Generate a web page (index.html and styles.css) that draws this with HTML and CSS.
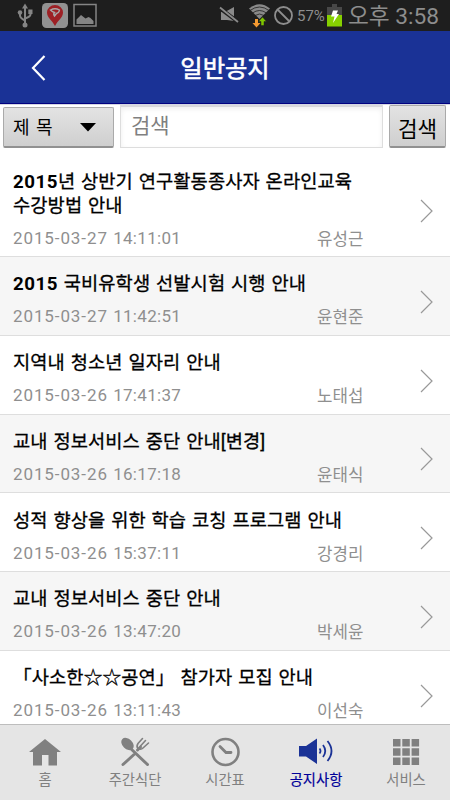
FILE: index.html
```
<!DOCTYPE html>
<html lang="ko">
<head>
<meta charset="utf-8">
<title>일반공지</title>
<link rel="stylesheet" href="styles.css">
</head>
<body>
<div class="status">
  <svg class="status-left" width="100" height="31" viewBox="0 0 100 31">
    <g fill="none" stroke="#858585" stroke-width="2"><path d="M25 7V25M20 12V15.500Q20 18 25 20.500M30.500 12V14.500Q30 17 25 18.500"/></g>
    <g fill="#858585"><path d="M25 3.500l3 5h-6z"/><circle cx="20" cy="12.500" r="2.300"/><path d="M28.300 9.500h4.200V14h-4.200z"/><circle cx="25" cy="25" r="2.500"/></g>
    <rect x="42" y="3" width="26" height="25" rx="4.500" fill="#929292"/>
    <path d="M55 26C52 20 47 17.500 47 12.500a8 7.500 0 0 1 16 0C63 17.500 58 20 55 26z" fill="#9d2025"/>
    <path d="M50.500 10q4.500-2.500 9 0-.5 3-3 3.500L54.500 16q-1.500-2 0-3.500-2-.5-4-2.500z" fill="none" stroke="#aaa" stroke-width="1.400"/>
    <rect x="74" y="4.500" width="22" height="21.500" fill="#1b1b1b" stroke="#858585" stroke-width="1.500"/>
    <path d="M76.500 24V19.500l4.500-4.500 4.500 3.500 3-1.500 2 1 3 3v3z" fill="#858585"/>
  </svg>
  <div class="status-right">
    <svg width="76" height="31" viewBox="0 0 76 31">
      <path d="M2 12h4l9-5v14L8 20H2z" fill="#8a8a8a"/><path d="M0 7.500l18.500 14" stroke="#1e1e1e" stroke-width="4"/><path d="M1 7.500L19 22" stroke="#8a8a8a" stroke-width="1.800"/>
      <path d="M30 8.500Q40.500 0 51 8.500L40.500 19z" fill="#8a8a8a"/><g fill="none" stroke="#1e1e1e" stroke-width=".8"><path d="M31 10.500q9.500-7 19 0M33.500 13q7-5 14 0M36 15.500q4.500-3 9 0"/></g>
      <path d="M36 19v4h-2.500l4 4.500 4-4.500H39v-4z" fill="#f39a31"/><path d="M43.500 17l4 4.500H45v4h-3v-4h-2.500z" fill="#7fc500" stroke="#1e1e1e" stroke-width=".5"/>
      <circle cx="64.500" cy="15.500" r="8.500" fill="none" stroke="#8d8d8d" stroke-width="1.800"/><path d="M58.500 9.500l12 12" stroke="#8d8d8d" stroke-width="1.800"/>
    </svg>
    <span class="percent">57%</span>
    <svg width="15" height="31" viewBox="0 0 15 31"><path d="M5 4h5v3h5v8H0V7h5z" fill="#484848"/><path d="M0 15h15v11.500H0z" fill="#86d000"/><path d="M6 10.500h5L9.500 14H12l-6 9 1.500-6.500H4z" fill="#fff"/></svg>
    <span class="clock">오후 3:58</span>
  </div>
</div>
<header class="header">
  <svg class="back" width="18" height="30" viewBox="0 0 18 30"><path d="M16.500 3L5 15l11.500 12" fill="none" stroke="#fff" stroke-width="2.200"/></svg>
  <h1>일반공지</h1>
</header>
<div class="search">
  <div class="button select"><span>제 목</span><svg width="16" height="9" viewBox="0 0 16 9"><path d="M0 0h16L8 8.500z"/></svg></div>
  <div class="field">검색</div>
  <div class="button submit">검색</div>
</div>
<main class="list">
  <article class="row first"><div class="text"><h2><b>2015</b>년 상반기 연구활동종사자 온라인교육<br>수강방법 안내</h2><p><time><span class="day">2015-03-27</span> 14:11:01</time><span>유성근</span></p></div><svg class="arrow" viewBox="0 0 14 24"><path d="M1 1l11 11L1 23"/></svg></article>
  <article class="row"><div class="text"><h2><b>2015</b> 국비유학생 선발시험 시행 안내</h2><p><time><span class="day">2015-03-27</span> 11:42:51</time><span>윤현준</span></p></div><svg class="arrow" viewBox="0 0 14 24"><path d="M1 1l11 11L1 23"/></svg></article>
  <article class="row"><div class="text"><h2>지역내 청소년 일자리 안내</h2><p><time><span class="day">2015-03-26</span> 17:41:37</time><span>노태섭</span></p></div><svg class="arrow" viewBox="0 0 14 24"><path d="M1 1l11 11L1 23"/></svg></article>
  <article class="row"><div class="text"><h2>교내 정보서비스 중단 안내[변경]</h2><p><time><span class="day">2015-03-26</span> 16:17:18</time><span>윤태식</span></p></div><svg class="arrow" viewBox="0 0 14 24"><path d="M1 1l11 11L1 23"/></svg></article>
  <article class="row"><div class="text"><h2>성적 향상을 위한 학습 코칭 프로그램 안내</h2><p><time><span class="day">2015-03-26</span> 15:37:11</time><span>강경리</span></p></div><svg class="arrow" viewBox="0 0 14 24"><path d="M1 1l11 11L1 23"/></svg></article>
  <article class="row"><div class="text"><h2>교내 정보서비스 중단 안내</h2><p><time><span class="day">2015-03-26</span> 13:47:20</time><span>박세윤</span></p></div><svg class="arrow" viewBox="0 0 14 24"><path d="M1 1l11 11L1 23"/></svg></article>
  <article class="row"><div class="text"><h2>「사소한☆☆공연」 참가자 모집 안내</h2><p><time><span class="day">2015-03-26</span> 13:11:43</time><span>이선숙</span></p></div><svg class="arrow" viewBox="0 0 14 24"><path d="M1 1l11 11L1 23"/></svg></article>
</main>
<nav class="tabs">
  <div class="tab"><svg width="36" height="32" viewBox="0 0 36 32"><path d="M18 2l16 13h-4v13.500h-8.500V18h-6.500v10.500H6V15H2z" fill="#808080"/></svg><span>홈</span></div>
  <div class="tab"><svg width="36" height="32" viewBox="0 0 36 32"><g fill="none" stroke="#808080" stroke-linecap="round"><path d="M12 10l18.500 17.500M6 27.500l11-10" stroke-width="3"/><path d="M20.500 13l3-3" stroke-width="3"/><path d="M25.500 1.500l-4.500 5q-2 3 0 5 3 1.500 5-.5l5.500-5M28.500 3.500l-5 5.500" stroke-width="1.600"/></g><ellipse cx="10.500" cy="7" rx="5" ry="7.200" transform="rotate(-45 10.500 7)" fill="#808080"/></svg><span>주간식단</span></div>
  <div class="tab"><svg width="36" height="32" viewBox="0 0 36 32"><g fill="none" stroke="#808080"><circle cx="18.500" cy="15" r="13" stroke-width="2.600"/><path d="M13 9.500l6 6h5" stroke-width="2.800" stroke-linecap="round"/></g></svg><span>시간표</span></div>
  <div class="tab active"><svg width="36" height="32" viewBox="0 0 36 32"><path d="M1 9h7l11-7.500V27L8 19.500H1z" fill="#1a3296"/><g fill="none" stroke="#1a3296" stroke-width="1.800"><path d="M21.500 11.500q2 2.500 0 5M25 8q4.500 6 0 12M29.500 4q8 10 0 20"/></g></svg><span>공지사항</span></div>
  <div class="tab"><svg width="36" height="32" viewBox="0 0 36 32"><path fill="#808080" d="M5 2h7.500v7.500H5zM14.300 2h7.500v7.500h-7.500zM23.600 2h7.500v7.500h-7.500zM5 11.300h7.500v7.500H5zM14.300 11.300h7.500v7.500h-7.500zM23.600 11.300h7.500v7.500h-7.500zM5 20.600h7.500v7.500H5zM14.300 20.600h7.500v7.500h-7.500zM23.600 20.600h7.500v7.500h-7.500z"/></svg><span>서비스</span></div>
</nav>
</body>
</html>
```
FILE: styles.css
```
* { box-sizing: border-box; }
body {
  margin: 0;
  width: 450px;
  height: 800px;
  overflow: hidden;
  display: flex;
  flex-direction: column;
  background: #fff;
  font-family: Roboto, "Noto Sans CJK KR", sans-serif;
  white-space: nowrap;
}
svg { display: block; flex: none; }
h1, h2, p { margin: 0; }
.status { height: 31px; flex: none; display: flex; justify-content: space-between; background: #1e1e1e; color: #8d8d8d; }
.status-right { display: flex; width: 231px; line-height: 32px; }
.percent { width: 32px; padding-left: 2px; font-size: 15px; }
.clock { padding-left: 6px; padding-top: 2px; font-size: 22.7px; line-height: 30px; }
.header { height: 73px; flex: none; display: flex; align-items: center; padding: 0 28px; background: #1a3296; border-bottom: 1px solid #000080; color: #fff; }
.back { margin-top: 2px; }
.header h1 { flex: 1; text-align: center; padding: 4px 18px 0 0; font-size: 24.3px; line-height: 36px; font-weight: 400; -webkit-text-stroke: .6px; }
.search { height: 50px; flex: none; display: flex; align-items: flex-start; padding: 0 4px 0 3px; border-top: 1px solid #d5d7e2; }
.button { border: 1px solid #aaa; border-bottom: 2px solid #919191; border-radius: 2px; background: linear-gradient(#e3e3e3, #cfcfcf); color: #000; }
.select { display: flex; align-items: center; justify-content: space-between; width: 111px; height: 41px; margin-top: 2px; padding: 0 17px 0 9px; font-size: 18px; word-spacing: 2px; }
.select span { margin-top: -2px; }
.field { width: 263px; height: 43px; margin-left: 6px; padding-left: 10px; border: 1px solid #ddd; border-top: 2px solid #d8d8dc; box-shadow: inset 0 2px 5px #eee; color: #808080; font-size: 21px; line-height: 39px; }
.submit { width: 57px; height: 43px; margin-left: 6px; text-align: center; font-size: 21.3px; line-height: 47px; }
.list { height: 570px; flex: none; overflow: hidden; }
.row { height: 78.75px; display: flex; align-items: center; border-bottom: 1px solid #dedede; }
.row:nth-child(even) { background: #f6f6f6; }
.row.first { height: 103px; }
.text { width: 420px; padding: 9px 0 0 13px; }
.row h2 { font-size: 18.7px; line-height: 24px; font-weight: 400; -webkit-text-stroke: .3px; color: #000; letter-spacing: .1px; word-spacing: 1.1px; }
.row h2 b { font-weight: 700; letter-spacing: .5px; -webkit-text-stroke: 0; }
.row p { display: flex; margin-top: 8px; line-height: 24px; font-size: 17px; color: #8f8f8f; }
.row time { width: 304px; letter-spacing: .3px; word-spacing: .8px; }
.day { letter-spacing: .9px; }
.row p > span { font-size: 16.8px; padding-top: 1px; margin-bottom: -1px; }
.arrow { width: 14px; height: 24px; margin-top: 12px; fill: none; stroke: #999; stroke-width: 1.2; }
.tabs { height: 76px; flex: none; display: flex; padding-top: 12px; background: #e5e5e5; border-top: 1px solid #bdbdbd; }
.tab { width: 90px; display: flex; flex-direction: column; align-items: center; color: #808080; font-size: 14.3px; line-height: 20px; }
.tab span { margin-top: 1px; }
.tab:nth-child(n+4) { padding-left: 2px; }
.tab.active { color: #000099; -webkit-text-stroke: .2px; }
```
